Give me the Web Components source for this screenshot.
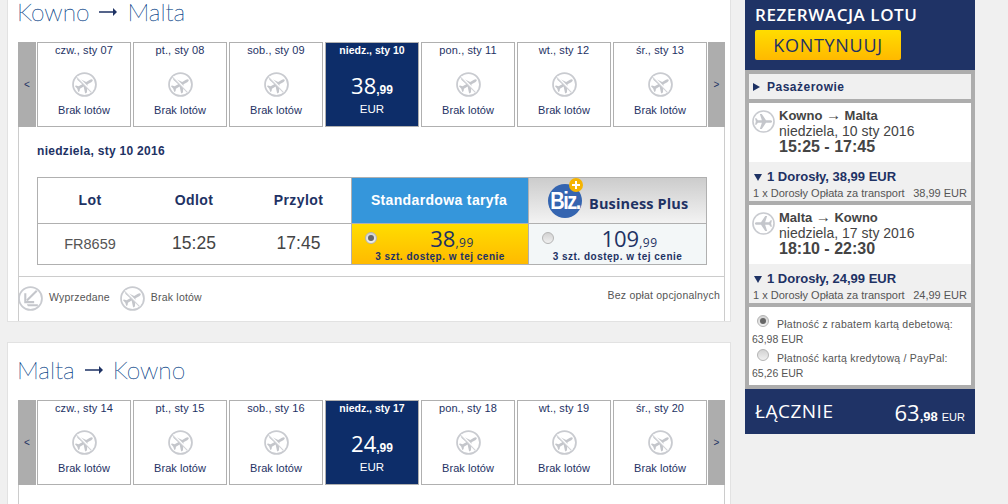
<!DOCTYPE html>
<html lang="pl">
<head>
<meta charset="utf-8">
<title>Rezerwacja lotu</title>
<style>
  html, body { margin: 0; height: 504px; overflow: hidden; background: #f0f0f0; }
  body { font-family: "Liberation Sans", Arial, sans-serif; color: #444; }
  booking-page { margin-top: -16px; }
</style>
</head>
<body>

<booking-page>
  <div>
    <flight-card from="Kowno" to="Malta" style="margin-bottom:20px"
      days="czw., sty 07|pt., sty 08|sob., sty 09|niedz., sty 10|pon., sty 11|wt., sty 12|śr., sty 13"
      price="38" cents="99">
      <flight-detail></flight-detail>
    </flight-card>
    <flight-card from="Malta" to="Kowno"
      days="czw., sty 14|pt., sty 15|sob., sty 16|niedz., sty 17|pon., sty 18|wt., sty 19|śr., sty 20"
      price="24" cents="99">
      <div style="height:100px"></div>
    </flight-card>
  </div>
  <booking-sidebar></booking-sidebar>
</booking-page>

<script>
// shared plane glyph, pointing right in a 24 box
const PLANE = 'M21 12c0-.9-1-1.3-2.2-1.3h-4.2L10.2 4.2H8.2l2.1 6.5H6.2L4.6 8.7H3.2l.8 3.3-.8 3.3h1.4l1.6-2h4.1l-2.1 6.5h2l4.4-6.5h4.2c1.2 0 2.2-.4 2.2-1.3z';

class PlaneIcon extends HTMLElement {
  connectedCallback() {
    const size = this.getAttribute('size') || 25;
    const kind = this.getAttribute('kind') || 'none';
    let inner = '';
    if (kind === 'none') {
      inner = `<path d="${PLANE}" fill="#c4c6cb" transform="rotate(-30 12 12)"/>
        <path d="M5 4.4 19.4 19" stroke="#fff" stroke-width="1.7"/>
        <path d="M4.2 5 18.6 19.6" stroke="#d0d2d6" stroke-width="1"/>`;
    } else if (kind === 'out') {
      inner = `<path d="${PLANE}" fill="#c4c6cb"/>`;
    } else if (kind === 'back') {
      inner = `<path d="${PLANE}" fill="#c4c6cb" transform="rotate(180 12 12)"/>`;
    } else {
      inner = `<path d="M18 4.5 8.5 14" fill="none" stroke="#c4c6cb" stroke-width="2"/>
        <path d="M7 7v8.5h8.5" fill="none" stroke="#c4c6cb" stroke-width="2"/>
        <path d="M8.5 17.5h10.5v2H9.5z" fill="#c4c6cb"/>`;
    }
    this.attachShadow({ mode: 'open' }).innerHTML = `
      <style>:host { display: block; width: ${size}px; height: ${size}px; } svg { display: block; }</style>
      <svg width="${size}" height="${size}" viewBox="0 0 24 24">
        <circle cx="12" cy="12" r="11" fill="none" stroke="#c9cbd0" stroke-width="1.7"/>
        ${inner}
      </svg>`;
  }
}
customElements.define('plane-icon', PlaneIcon);

class RadioDot extends HTMLElement {
  connectedCallback() {
    const on = this.hasAttribute('checked');
    this.attachShadow({ mode: 'open' }).innerHTML = `
      <style>
        :host { display: block; width: 12px; height: 12px; border-radius: 50%; box-sizing: border-box;
          border: 1px solid #b4b4b4; background: linear-gradient(#d2d2d2, #f0f0f0); position: relative; }
        i { position: absolute; left: 2px; top: 2px; width: 6px; height: 6px; border-radius: 50%; background: #666; }
      </style>
      ${on ? '<i></i>' : ''}`;
  }
}
customElements.define('radio-dot', RadioDot);

class DayCell extends HTMLElement {
  connectedCallback() {
    const label = this.getAttribute('label');
    const price = this.getAttribute('price');
    const root = this.attachShadow({ mode: 'open' });
    root.innerHTML = `
      <style>
        :host { display: flex; flex-direction: column; align-items: center; box-sizing: border-box;
          width: 94px; height: 85px; border: 1px solid #b0b0b0; background: #fff; color: #1e3264;
          font: 11px "Liberation Sans", Arial, sans-serif; }
        :host([price]) { background: #0d2d69; color: #fff; }
        .date { margin-top: 0; line-height: 14px; letter-spacing: .1px; }
        :host([price]) .date { font-weight: bold; font-size: 10.5px; letter-spacing: 0; }
        plane-icon { margin-top: 15px; }
        .none { margin-top: 7px; line-height: 13px; letter-spacing: .05px; }
        .price { margin-top: 14px; height: 28px; font: 500 22px/28px "Open Sans", sans-serif; }
        .price small { font: bold 12px "Liberation Sans", Arial, sans-serif; }
        .cur { margin-top: 3px; font-size: 11.5px; line-height: 14px; }
      </style>
      <div class="date">${label}</div>
      ${price
        ? `<div class="price">${price}<small>,${this.getAttribute('cents')}</small></div><div class="cur">EUR</div>`
        : `<plane-icon kind="none"></plane-icon><div class="none">Brak lotów</div>`}`;
  }
}
customElements.define('day-cell', DayCell);

class DayStrip extends HTMLElement {
  connectedCallback() {
    const days = this.getAttribute('days').split('|');
    const cells = days.map((d, i) => i === 3
      ? `<day-cell label="${d}" price="${this.getAttribute('price')}" cents="${this.getAttribute('cents')}"></day-cell>`
      : `<day-cell label="${d}"></day-cell>`).join('');
    this.attachShadow({ mode: 'open' }).innerHTML = `
      <style>
        :host { display: flex; height: 85px; gap: 2px; }
        .nav { flex: none; display: flex; align-items: center; justify-content: center; background: #adadad;
          color: #1e3264; font: 10px "Liberation Sans", Arial, sans-serif; }
        .prev { width: 18px; margin-right: -1px; }
        .next { width: 17px; margin-left: -1px; }
      </style>
      <div class="nav prev">&lt;</div>${cells}<div class="nav next">&gt;</div>`;
  }
}
customElements.define('day-strip', DayStrip);

class FareTable extends HTMLElement {
  connectedCallback() {
    this.attachShadow({ mode: 'open' }).innerHTML = `
      <style>
        :host { display: grid; grid-template-columns: 104px 104px 105px 177px 178px; grid-template-rows: 46px 40px;
          width: 670px; box-sizing: border-box; border: 1px solid #b0b0b0; background: #fff;
          font-family: "Liberation Sans", Arial, sans-serif; }
        .h { display: flex; align-items: center; justify-content: center; border-bottom: 1px solid #b0b0b0;
          font-weight: bold; font-size: 14px; letter-spacing: .4px; color: #1e3264; padding-bottom: 1px; box-sizing: border-box; }
        .std { background: #3596db; color: #fff; font-size: 14px; border-left: 1px solid #b0b0b0; letter-spacing: .35px; padding-right: 2px; }
        .biz { background: linear-gradient(#cccccc, #f3f3f3); border-left: 1px solid #b0b0b0; justify-content: flex-start; padding-left: 19px; color: #1e3264; }
        .logo { position: relative; flex: none; width: 34px; height: 34px; margin-top: 2px; border-radius: 50%; background: #3565b0;
          display: flex; align-items: center; justify-content: center; color: #fff; font-size: 20px; letter-spacing: -1.5px; }
        .logo em { font-style: normal; transform: scaleY(1.15); }
        .logo i { position: absolute; left: 21px; top: -6px; width: 14px; height: 14px; border-radius: 50%; background: #f5b400; }
        .logo i::before, .logo i::after { content: ""; position: absolute; background: #fff; }
        .logo i::before { left: 6px; top: 3px; width: 2px; height: 8px; }
        .logo i::after { left: 3px; top: 6px; width: 8px; height: 2px; }
        .biz span { margin-left: 7px; margin-top: 7px; font: bold 14.5px "Open Sans", sans-serif; letter-spacing: .15px; }
        .c { display: flex; align-items: center; justify-content: center; color: #444; font-size: 17.5px; padding-bottom: 1px; }
        .c.no { font-size: 14.5px; color: #555; }
        .fare { position: relative; display: flex; flex-direction: column; align-items: center; color: #1e3264; border-left: 1px solid #b0b0b0; }
        .fare.y { background: linear-gradient(#ffdd00, #ffba00); }
        .fare.g { background: #f3f7f8; }
        .fare radio-dot { position: absolute; left: 13px; top: 8px; }
        .p { font: 22px/28px "Open Sans", sans-serif; height: 28px; padding-left: 24px; }
        .p small { font-size: 12px; letter-spacing: .5px; }
        .n { font-weight: bold; font-size: 10px; line-height: 12px; letter-spacing: .5px; margin-top: -1px; }
      </style>
      <div class="h">Lot</div><div class="h">Odlot</div><div class="h">Przylot</div>
      <div class="h std">Standardowa taryfa</div>
      <div class="h biz">
        <div class="logo"><em>Biz.</em><i></i></div>
        <span>Business Plus</span>
      </div>
      <div class="c no">FR8659</div><div class="c">15:25</div><div class="c">17:45</div>
      <div class="fare y"><radio-dot checked></radio-dot><div class="p">38<small>,99</small></div><div class="n">3 szt. dostęp. w tej cenie</div></div>
      <div class="fare g"><radio-dot></radio-dot><div class="p">109<small>,99</small></div><div class="n">3 szt. dostęp. w tej cenie</div></div>`;
  }
}
customElements.define('fare-table', FareTable);

class FlightDetail extends HTMLElement {
  connectedCallback() {
    this.attachShadow({ mode: 'open' }).innerHTML = `
      <style>
        :host { display: block; font-family: "Liberation Sans", Arial, sans-serif; }
        .panel { box-sizing: border-box; height: 150px; padding: 17px 0 0 18px; border-bottom: 1px solid #ccc; }
        .date { font-weight: bold; font-size: 12px; line-height: 15px; letter-spacing: .3px; color: #1e3264; margin-bottom: 18px; }
        .foot { display: flex; align-items: center; height: 44px; margin-left: -1px; padding-bottom: 1px; box-sizing: border-box; font-size: 10.5px; color: #555; }
        .foot span { margin: 0 9px 4px 6px; letter-spacing: .2px; }
        .foot span:first-of-type { margin-right: 10px; }
        .foot b { font-weight: normal; margin: 0 4px 8px auto; letter-spacing: .2px; }
      </style>
      <div class="panel">
        <div class="date">niedziela, sty 10 2016</div>
        <fare-table></fare-table>
      </div>
      <div class="foot">
        <plane-icon kind="sold"></plane-icon><span>Wyprzedane</span>
        <plane-icon kind="none"></plane-icon><span>Brak lotów</span>
        <b>Bez opłat opcjonalnych</b>
      </div>`;
  }
}
customElements.define('flight-detail', FlightDetail);

class FlightCard extends HTMLElement {
  connectedCallback() {
    const days = this.getAttribute('days');
    const price = this.getAttribute('price');
    const cents = this.getAttribute('cents');
    this.attachShadow({ mode: 'open' }).innerHTML = `
      <style>
        :host { display: block; box-sizing: border-box; background: #fff; border: 1px solid #e2e2e2; padding: 0 5px 0 10px; }
        h2 { margin: 0 0 0 -1px; height: 57px; padding-bottom: 4px; box-sizing: border-box; display: flex; align-items: center; gap: 10px;
          font: 100 24.5px/22px Lato, sans-serif; color: #124a8c; -webkit-text-stroke: .3px #124a8c; }
        h2 svg { display: block; margin-top: 1px; }
        .box { border-left: 1px solid #ccc; border-right: 1px solid #ccc; width: 707px; box-sizing: border-box; }
        day-strip { margin: 0 -1px; }
      </style>
      <h2>${this.getAttribute('from')}
        <svg width="18" height="8" viewBox="0 0 18 8"><path d="M0 3.2h14V0l4 4-4 4V4.8H0z" fill="#1e3264"/></svg>
        ${this.getAttribute('to')}</h2>
      <div class="box">
        <day-strip days="${days}" price="${price}" cents="${cents}"></day-strip>
        <slot></slot>
      </div>`;
  }
}
customElements.define('flight-card', FlightCard);

class TripSummary extends HTMLElement {
  connectedCallback() {
    const a = (n) => this.getAttribute(n);
    const [from, to] = a('route').split(' → ');
    this.attachShadow({ mode: 'open' }).innerHTML = `
      <style>
        :host { display: block; font-family: "Liberation Sans", Arial, sans-serif; }
        .top { background: #fff; height: 59px; display: flex; gap: 4px; padding: 4px 0 0 3px; box-sizing: border-box; color: #444; }
        plane-icon { margin-top: 3px; }
        .route { font-weight: bold; font-size: 13px; line-height: 15px; white-space: nowrap; }
        .route span { font-weight: normal; font-size: 15px; line-height: 15px; }
        .day { font-size: 14px; line-height: 16px; }
        .time { font-weight: bold; font-size: 16px; line-height: 16px; }
        .fee { background: #f0f0f0; height: 39px; padding: 5px 4px 0 4px; box-sizing: border-box; }
        .sum { font-weight: bold; font-size: 13px; line-height: 17px; height: 19px; color: #1e3264; display: flex; align-items: center; }
        .sum i { width: 0; height: 0; border: 4px solid transparent; border-top: 7px solid #1e3264; border-bottom: 0; margin: 1px 5px 0 1px; }
        .row { display: flex; justify-content: space-between; font-size: 11px; line-height: 15px; color: #555; }
      </style>
      <div class="top">
        <plane-icon size="23" kind="${a('kind')}"></plane-icon>
        <div>
          <div class="route">${from} <span>→</span> ${to}</div>
          <div class="day">${a('day')}</div>
          <div class="time">${a('time')}</div>
        </div>
      </div>
      <div class="fee">
        <div class="sum"><i></i>1 Dorosły, ${a('fare')} EUR</div>
        <div class="row"><span>1 x Dorosły Opłata za transport</span><span>${a('fare')} EUR</span></div>
      </div>`;
  }
}
customElements.define('trip-summary', TripSummary);

class BookingSidebar extends HTMLElement {
  connectedCallback() {
    this.attachShadow({ mode: 'open' }).innerHTML = `
      <style>
        :host { display: block; width: 230px; margin: 16px 0 0 14px; font-family: "Liberation Sans", Arial, sans-serif; }
        .head { background: #1f3366; height: 70px; padding: 4px 10px 0; box-sizing: border-box; color: #fff; }
        .title { font: 600 17px/22px "Open Sans", sans-serif; letter-spacing: .55px; }
        .btn { margin-top: 4px; width: 146px; height: 30px; border-radius: 2px; display: flex; align-items: center; justify-content: center;
          background: linear-gradient(#ffdd00, #ffb900); color: #1e3264; font: 18px "Open Sans", sans-serif; letter-spacing: .7px; }
        .body { background: #adadad; padding: 4px; display: flex; flex-direction: column; gap: 4px; }
        .pax { background: #f0f0f0; height: 25px; display: flex; align-items: center; padding-left: 4px; font-weight: bold; font-size: 12px;
          letter-spacing: .5px; color: #1e3264; }
        .pax i { width: 0; height: 0; border: 4px solid transparent; border-left: 7px solid #1e3264; border-right: 0; margin: 1px 7px 0 0; }
        .pay { background: #fff; height: 78px; padding: 8px 3px 0; box-sizing: border-box; font-size: 10.5px; line-height: 15px; color: #555; }
        .opt { display: flex; gap: 8px; padding-left: 5px; letter-spacing: .25px; align-items: flex-start; height: 17px; }
        .opt span { padding-top: 2px; }
        .amt { height: 17px; }
        .total { background: #1f3366; height: 45px; padding: 0 10px; display: flex; align-items: center; justify-content: space-between; color: #fff; }
        .total b { font: 19px "Open Sans", sans-serif; letter-spacing: .5px; margin-top: -2px; }
        .sum { font: 22px "Open Sans", sans-serif; }
        .sum small { font: bold 13px "Liberation Sans", Arial, sans-serif; margin-right: 4px; }
        .sum em { font: 11px "Liberation Sans", Arial, sans-serif; }
      </style>
      <div class="head">
        <div class="title">REZERWACJA LOTU</div>
        <div class="btn">KONTYNUUJ</div>
      </div>
      <div class="body">
        <div class="pax"><i></i>Pasażerowie</div>
        <trip-summary kind="out" route="Kowno → Malta" day="niedziela, 10 sty 2016" time="15:25 - 17:45" fare="38,99"></trip-summary>
        <trip-summary kind="back" route="Malta → Kowno" day="niedziela, 17 sty 2016" time="18:10 - 22:30" fare="24,99"></trip-summary>
        <div class="pay">
          <div class="opt"><radio-dot checked></radio-dot><span>Płatność z rabatem kartą debetową:</span></div>
          <div class="amt">63,98 EUR</div>
          <div class="opt"><radio-dot></radio-dot><span>Płatność kartą kredytową / PayPal:</span></div>
          <div class="amt">65,26 EUR</div>
        </div>
      </div>
      <div class="total"><b>ŁĄCZNIE</b><div class="sum">63<small>,98</small><em>EUR</em></div></div>`;
  }
}
customElements.define('booking-sidebar', BookingSidebar);

class BookingPage extends HTMLElement {
  connectedCallback() {
    this.attachShadow({ mode: 'open' }).innerHTML = `
      <style>
        :host { display: flex; align-items: flex-start; padding-left: 7px; }
        ::slotted(div) { width: 724px; }
      </style>
      <slot></slot>`;
  }
}
customElements.define('booking-page', BookingPage);
</script>
</body>
</html>
